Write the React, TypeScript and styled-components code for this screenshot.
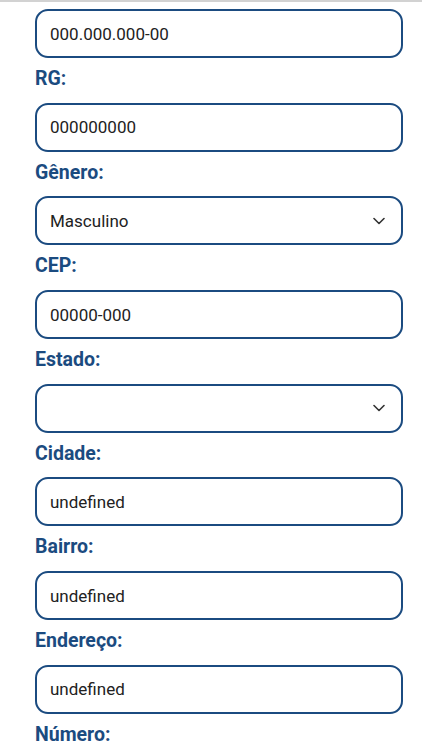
import styled, { createGlobalStyle } from "styled-components";

const Global = createGlobalStyle`
  html, body {
    margin: 0;
    background: #ffffff;
    font-family: Roboto, "Noto Sans", sans-serif;
  }
`;

const Page = styled.div`
  border-top: 2px solid #d2d2d2;
  padding: 7px 19px 0 35px;
  height: 748px;
  overflow: hidden;
  box-sizing: border-box;
`;

const Label = styled.div`
  color: #1b4b80;
  font-size: 19.5px;
  font-weight: 700;
  line-height: 22px;
  margin: 10px 0 12.7px;
`;

const Box = styled.div`
  height: 49px;
  box-sizing: border-box;
  border: 2.5px solid #1b4b80;
  border-radius: 13px;
  display: flex;
  align-items: center;
  padding: 0 16px 0 13px;
  color: #222222;
  font-size: 17px;
`;

const Value = styled.span`
  flex: 1;
`;

const Chevron = () => (
  <svg width="12" height="8" viewBox="0 0 12 8" fill="none">
    <path d="M1 1.5l5 5 5-5" stroke="#333" strokeWidth="1.6" strokeLinecap="round" strokeLinejoin="round" />
  </svg>
);

type FieldProps = { label?: string; value?: string; select?: boolean };

function Field({ label, value, select }: FieldProps) {
  return (
    <>
      {label && <Label>{label}</Label>}
      <Box>
        <Value>{value}</Value>
        {select && <Chevron />}
      </Box>
    </>
  );
}

export default function App() {
  return (
    <>
      <Global />
      <Page>
        <Field value="000.000.000-00" />
        <Field label="RG:" value="000000000" />
        <Field label="Gênero:" value="Masculino" select />
        <Field label="CEP:" value="00000-000" />
        <Field label="Estado:" value="" select />
        <Field label="Cidade:" value="undefined" />
        <Field label="Bairro:" value="undefined" />
        <Field label="Endereço:" value="undefined" />
        <Label>Número:</Label>
      </Page>
    </>
  );
}
